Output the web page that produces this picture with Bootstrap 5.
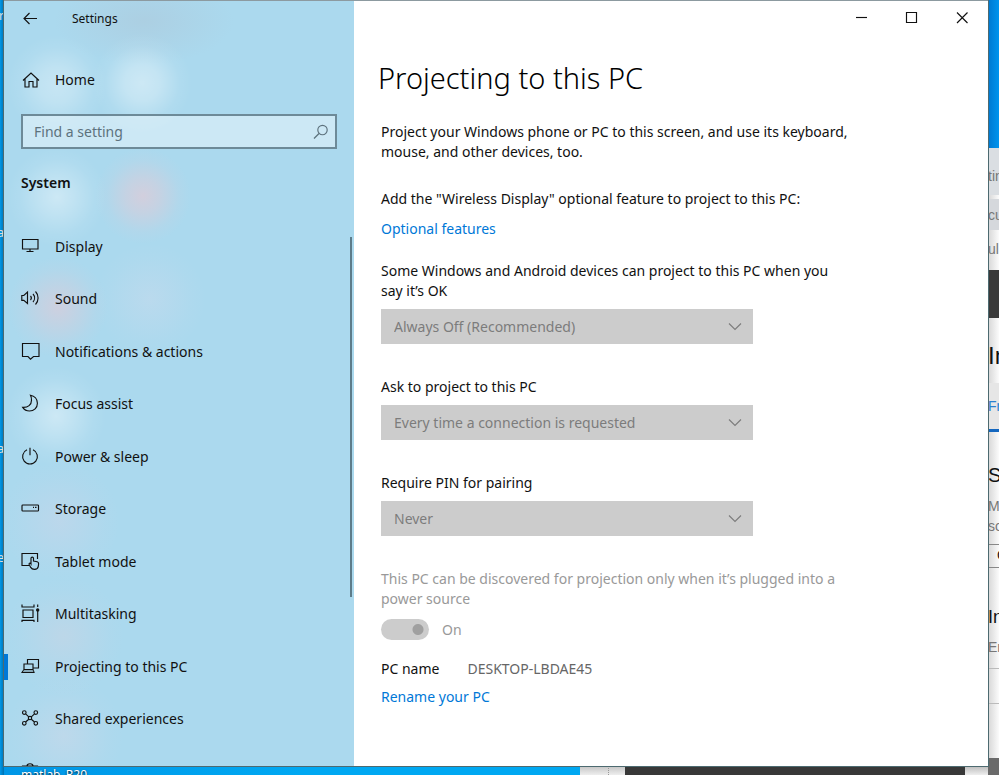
<!DOCTYPE html>
<html lang="en">
<head>
<meta charset="utf-8">
<meta name="viewport" content="width=device-width, initial-scale=1">
<title>Settings</title>
<link rel="stylesheet" href="https://cdn.jsdelivr.net/npm/bootstrap@5.3.0/dist/css/bootstrap.min.css">
<style>
body{font-family:"Noto Sans","Open Sans",sans-serif;font-size:14px;line-height:20px;color:#111}
svg{fill:none;stroke:#111;stroke-width:1.15;flex:none;display:block}
.desktop{padding:0 11px 9px 4px;background:linear-gradient(90deg,#0078c8 0,#0096e6 3px,#00a8f2 300px,#00a8f2)}
.app-window{z-index:1;background:#fff;border-top:1px solid #8c9aa0;outline:1px solid #4d6a70;min-width:0}
/* windows behind */
.back-right{width:11px;top:0;right:0;bottom:0;font:14px/20px "Liberation Sans",sans-serif;color:#777;background:linear-gradient(90deg,#d6d6d6,#fbfbfb)}
.back-right>div{flex:none;overflow:hidden;white-space:nowrap}
.b-sky{height:148px;background:linear-gradient(90deg,#0078d0,#0094ee)}
.b-tab{height:47px;padding-top:18px;background:#dadee2}
.b-url{height:31px;margin-top:4px;padding-top:6px;background:#d5d8dc}
.b-marks{height:40px;padding-top:9px}
.b-dark{height:48px;background:#3a3a3a}
.b-head{height:65px;padding-top:26px;font-size:24px;line-height:24px;color:#111}
.b-link{height:49px;padding-top:13px;color:#2a80d0;background:#e6e6e6;border-bottom:3px solid #1467bf}
.b-sub{height:64px;padding-top:33px;font-size:20px;color:#111}
.b-text{height:48px}
.b-button{height:24px;padding-left:8px;color:#111;border:1px solid #888;border-right:0}
.b-sub2{height:69px;padding-top:39px;font-size:18px;color:#111}
.b-text2{height:31px}
.b-line{height:36px;border:solid #bbb;border-width:1px 0}
.b-foot{height:17px;margin-top:auto;background:#6a6a6a}
.back-bottom{left:0;right:11px;bottom:0;height:9px}
.k-desk{flex:580 0 0;min-width:0;text-indent:21px;font-size:12px;line-height:18px;color:#fff;text-shadow:0 1px 2px #000}
.k-light{flex:45 0 0;background:linear-gradient(#c4c4c4,#eee)}
.k-light i{width:1px;margin-left:28px;border-left:1px dotted #999}
.k-dark{flex:340 0 0;background:#383838}
.k-end{flex:23 0 0;background:linear-gradient(#bbb,#eee)}
.edge-labels{left:0;top:0;bottom:0;width:4px;overflow:hidden;color:#ddd;font-size:12px;background:linear-gradient(90deg,#0098e8,#0070b0)}
.edge-labels span{position:absolute;right:0}
.e1{top:6px}.e2{top:223px}.e3{top:439px}.e4{top:548px}
/* sidebar */
.side{flex:0 0 350px;overflow:hidden;background:
 radial-gradient(circle 50px at 53px 84px,#ffffff55,#ffffff40 35%,#ffffff10 75%,#fff0),
 radial-gradient(circle 50px at 138px 82px,#ffffff66,#ffffff4d 35%,#ffffff10 75%,#fff0),
 radial-gradient(circle 50px at 53px 196px,#ffffff66,#ffffff40 35%,#ffffff10 75%,#fff0),
 radial-gradient(circle 48px at 139px 195px,#ecc8d299,#ecc8d266 35%,#ecc8d218 75%,#ecc8d200),
 radial-gradient(circle 50px at 54px 306px,#ecc8d288,#ecc8d255 35%,#ecc8d218 75%,#ecc8d200),
 radial-gradient(circle 56px at 146px 298px,#e4dcec44,#e4dcec0c 75%,#e4dcec00),
 radial-gradient(circle 50px at 52px 415px,#ffffff66,#ffffff40 35%,#ffffff10 75%,#fff0),
 radial-gradient(circle 60px at 56px 520px,#e8d2e444,#e8d2e40c 75%,#e8d2e400),
 radial-gradient(circle 60px at 60px 635px,#e4d2dc4d,#e4d2dc0c 75%,#e4d2dc00),
 radial-gradient(circle 60px at 60px 735px,#e8d8e44d,#e8d8e40c 75%,#e8d8e400),
 radial-gradient(ellipse 90px 44px at 140px 20px,#b0a8b433,#b0a8b40c 75%,#b0a8b400),
 #abd9ee}
.title-row{height:35px;padding-left:17px;gap:31px;font-size:12px}
.icon-btn{padding:0;border:0;background:none;line-height:1}
.side a{color:#111;text-decoration:none;gap:14px}
.home-row{height:34px;margin-top:27px;padding-left:17px}
.find-box{height:35px;margin:17px 17px 0 17px;border:2px solid #6d8a98;background:#ffffff66;padding-right:6px}
.find-box input{border:0;background:none;padding:0 0 0 11px;outline:0;flex:1;min-width:0;color:#111}
.find-box input::placeholder{color:#5d727d}
.find-box svg{stroke:#5d727d}
.group-title{margin:24px 0 27px 17px;font-size:14px;font-weight:600;line-height:20px}
.nav-area{flex:1 1 0;min-height:0;overflow:hidden}
.nav-area li{height:53px}
.nav-area li:nth-child(even){height:52px}
.nav-area a{height:100%;padding-left:17px;position:relative}
.nav-area a.current::before{content:"";position:absolute;left:0;top:14px;width:4px;height:26px;background:#0078d7}
.scroll-thumb{position:absolute;right:2px;top:17px;width:2px;height:360px;background:#5d7c8a}
/* main */
.main-pane{min-width:0}
.win-btns{height:34px;gap:34px;padding-right:18px}
.page-body{padding:0 100px 0 27px}
.page-body h1{margin:23px 0 24px -3px;font-size:29px;line-height:40px;font-weight:300;color:#000}
.page-body a{color:#0078d7;text-decoration:none}
.body-col{max-width:488px}
.body-col p{margin:0}
.gap-l{margin-bottom:27px!important}
.gap-m{margin-bottom:22px!important}
.gap-s{margin-bottom:10px!important}
.body-col label{max-width:470px;margin-bottom:8px;display:block}
.pick{position:relative;max-width:372px;margin-bottom:33px}
.pick select{appearance:none;width:100%;height:35px;padding:0 40px 0 13px;border:0;background:#ccc;color:#7c7c7c;opacity:1;display:block}
.pick svg{position:absolute;right:10px;top:10px;stroke:#7c7c7c}
.muted{color:#999}
.toggle-row{gap:13px;margin-bottom:19px}
.toggle-row input{appearance:none;width:48px;height:21px;border-radius:11px;margin:0;background:radial-gradient(circle at 37px 50%,#a0a0a0 5px,#ccc 6px)}
.body-col .toggle-row label{margin:0}
.pc-row{gap:28px}
.pc-row dd{color:#666;margin:0}
.pc-row dt{font-weight:400}
</style>
<script src="https://cdn.jsdelivr.net/npm/bootstrap@5.3.0/dist/js/bootstrap.bundle.min.js"></script>
</head>
<body>
<div class="desktop vh-100 d-flex position-relative overflow-hidden">
  <div class="edge-labels position-absolute"><span class="e1">r</span><span class="e2">a</span><span class="e3">a</span><span class="e4">e</span></div>
  <div class="back-bottom position-absolute d-flex overflow-hidden">
    <div class="k-desk">matlab_R20</div><div class="k-light d-flex"><i></i></div><div class="k-dark"></div><div class="k-end"></div>
  </div>
  <div class="back-right position-absolute d-flex flex-column">
    <div class="b-sky"></div><div class="b-tab">tin</div><div class="b-url">cu</div><div class="b-marks">ulla</div><div class="b-dark"></div>
    <div class="b-head">In</div><div class="b-link">Fr</div><div class="b-sub">S</div><div class="b-text">M<br>so</div><div class="b-button">C</div>
    <div class="b-sub2">In</div><div class="b-text2">En</div><div class="b-line"></div><div class="b-foot"></div>
  </div>

  <div class="app-window d-flex flex-grow-1">
    <aside class="side d-flex flex-column">
      <div class="title-row d-flex align-items-center">
        <button class="icon-btn" aria-label="Back"><svg width="20" height="20" viewBox="0 0 20 20"><path d="M16 9.500H3M8.500 4 3 9.500l5.500 5.500"/></svg></button>
        <span>Settings</span>
      </div>
      <a class="home-row d-flex align-items-center" href="#"><svg width="20" height="20" viewBox="0 0 20 20"><path d="M2 10.500 10 3l8 7.500M4 9v8h4v-5.500h4V17h4V9"/></svg><span>Home</span></a>
      <div class="find-box d-flex align-items-center">
        <input type="text" placeholder="Find a setting" aria-label="Find a setting">
        <button class="icon-btn" aria-label="Search"><svg width="16" height="16" viewBox="0 0 16 16"><circle cx="9.500" cy="6" r="4.700"/><path d="M6 9.500 1 14.500"/></svg></button>
      </div>
      <h2 class="group-title">System</h2>
      <nav class="nav-area position-relative" aria-label="System">
        <ul class="list-unstyled m-0">
          <li><a class="d-flex align-items-center" href="#"><svg width="20" height="20" viewBox="0 0 20 20"><path d="M1.500 2.500h15.500v9.500h-15.500zM9 12v2.500M5.500 14.500h7"/></svg><span>Display</span></a></li>
          <li><a class="d-flex align-items-center" href="#"><svg width="20" height="20" viewBox="0 0 20 20"><path d="M.8 6.500h2L6.500 3v11.500L2.800 11.300h-2zM9.500 7a3 3 0 0 1 0 4M12 5a6 6 0 0 1 0 8M14.500 2.500a9.500 9.500 0 0 1 0 13"/></svg><span>Sound</span></a></li>
          <li><a class="d-flex align-items-center" href="#"><svg width="20" height="20" viewBox="0 0 20 20"><path d="M1.500 1.500h16.500v13h-5.500L9.500 17.200 7 14.500H1.500z"/></svg><span>Notifications &amp; actions</span></a></li>
          <li><a class="d-flex align-items-center" href="#"><svg width="20" height="20" viewBox="0 0 20 20"><path d="M9.500 1.200c4 .8 6.900 4 6.900 8 0 4.500-3.400 7.800-7.900 7.800-3 0-5.300-1.300-6.800-3.600 5.300.3 8.800-2.600 8.800-7.200 0-2-.3-3.700-1-5z"/></svg><span>Focus assist</span></a></li>
          <li><a class="d-flex align-items-center" href="#"><svg width="20" height="20" viewBox="0 0 20 20"><path d="M9 .8v7.500M6 2.800a7.400 7.400 0 1 0 6 0"/></svg><span>Power &amp; sleep</span></a></li>
          <li><a class="d-flex align-items-center" href="#"><svg width="20" height="20" viewBox="0 0 20 20"><rect x="1" y="6" width="16.500" height="6" rx=".8"/><path d="M12 8.300h1M14 8.300h1.500"/></svg><span>Storage</span></a></li>
          <li><a class="d-flex align-items-center" href="#"><svg width="20" height="20" viewBox="0 0 20 20"><path d="M8 13.500H1v-12h15.500V7"/><path d="M10 12V6.300a1.200 1.200 0 0 1 2.500 0V9l3.700.8c1 .3 1.500 1 1.400 2l-.3 2.500c-.3 2-1.800 3-3.800 3-1.800 0-3-.6-3.800-1.900l-1.500-2.900c-.5-1.300.9-2 1.800-.5z"/></svg><span>Tablet mode</span></a></li>
          <li><a class="d-flex align-items-center" href="#"><svg width="20" height="20" viewBox="0 0 20 20"><path d="M1 .5v2.500h12V.5M2 6h10v7.500H2zM1 18v-1.700h12V18M16.700.5v2.500M16.700 6.500V18"/><circle cx="16.700" cy="6" r="1.100" fill="#111"/></svg><span>Multitasking</span></a></li>
          <li><a class="current d-flex align-items-center" href="#" aria-current="page"><svg width="20" height="20" viewBox="0 0 20 20"><path d="M6.500 7V2.500h11v8.500h-5.500M3 7h9v5.500H3zM3 12.500 1 15.500h12l-1-3"/><path d="M2.500 14h10" stroke="#6b8490"/></svg><span>Projecting to this PC</span></a></li>
          <li><a class="d-flex align-items-center" href="#"><svg width="20" height="20" viewBox="0 0 20 20"><circle cx="3.300" cy="3.500" r="1.800"/><circle cx="14.800" cy="3.500" r="1.800"/><circle cx="3.300" cy="14.300" r="1.800"/><circle cx="14.800" cy="14.300" r="1.800"/><circle cx="9" cy="9" r="1.700"/><path d="m4.600 4.800 3.200 3M13.500 4.800l-3.200 3M4.600 13l3.200-2.800M13.500 13l-3.200-2.800"/></svg><span>Shared experiences</span></a></li>
          <li><a class="d-flex align-items-center" href="#" aria-label="Clipboard"><svg width="20" height="20" viewBox="0 0 20 20"><path d="M1.500 4h15v11h-15zM6 4c0-3 6-3 6 0"/></svg></a></li>
        </ul>
        <div class="scroll-thumb"></div>
      </nav>
    </aside>

    <main class="main-pane flex-grow-1">
      <div class="win-btns d-flex justify-content-end align-items-center">
        <button class="icon-btn" aria-label="Minimize"><svg width="16" height="16" viewBox="0 0 16 16"><path d="M2 7.500h11"/></svg></button>
        <button class="icon-btn" aria-label="Maximize"><svg width="16" height="16" viewBox="0 0 16 16"><path d="M2.500 2.500h10v10h-10z"/></svg></button>
        <button class="icon-btn" aria-label="Close"><svg width="16" height="16" viewBox="0 0 16 16"><path d="m3 2.500 10.500 10.500M13.500 2.500 3 13"/></svg></button>
      </div>
      <div class="page-body">
        <h1>Projecting to this PC</h1>
        <div class="body-col">
          <p class="gap-l">Project your Windows phone or PC to this screen, and use its keyboard, mouse, and other devices, too.</p>
          <p class="gap-s">Add the "Wireless Display" optional feature to project to this PC:</p>
          <p class="gap-m"><a href="#">Optional features</a></p>
          <label for="who">Some Windows and Android devices can project to this PC when you say it’s OK</label>
          <div class="pick"><select id="who" disabled><option>Always Off (Recommended)</option></select><svg width="16" height="16" viewBox="0 0 16 16"><path d="m2 4.500 6 6 6-6"/></svg></div>
          <label for="ask">Ask to project to this PC</label>
          <div class="pick"><select id="ask" disabled><option>Every time a connection is requested</option></select><svg width="16" height="16" viewBox="0 0 16 16"><path d="m2 4.500 6 6 6-6"/></svg></div>
          <label for="pin">Require PIN for pairing</label>
          <div class="pick"><select id="pin" disabled><option>Never</option></select><svg width="16" height="16" viewBox="0 0 16 16"><path d="m2 4.500 6 6 6-6"/></svg></div>
          <p class="muted gap-s">This PC can be discovered for projection only when it’s plugged into a power source</p>
          <div class="toggle-row d-flex align-items-center muted"><input type="checkbox" role="switch" id="plug" checked disabled><label for="plug">On</label></div>
          <dl class="pc-row d-flex mb-2"><dt>PC name</dt><dd>DESKTOP-LBDAE45</dd></dl>
          <p><a href="#">Rename your PC</a></p>
        </div>
      </div>
    </main>
  </div>
</div>
</body>
</html>
